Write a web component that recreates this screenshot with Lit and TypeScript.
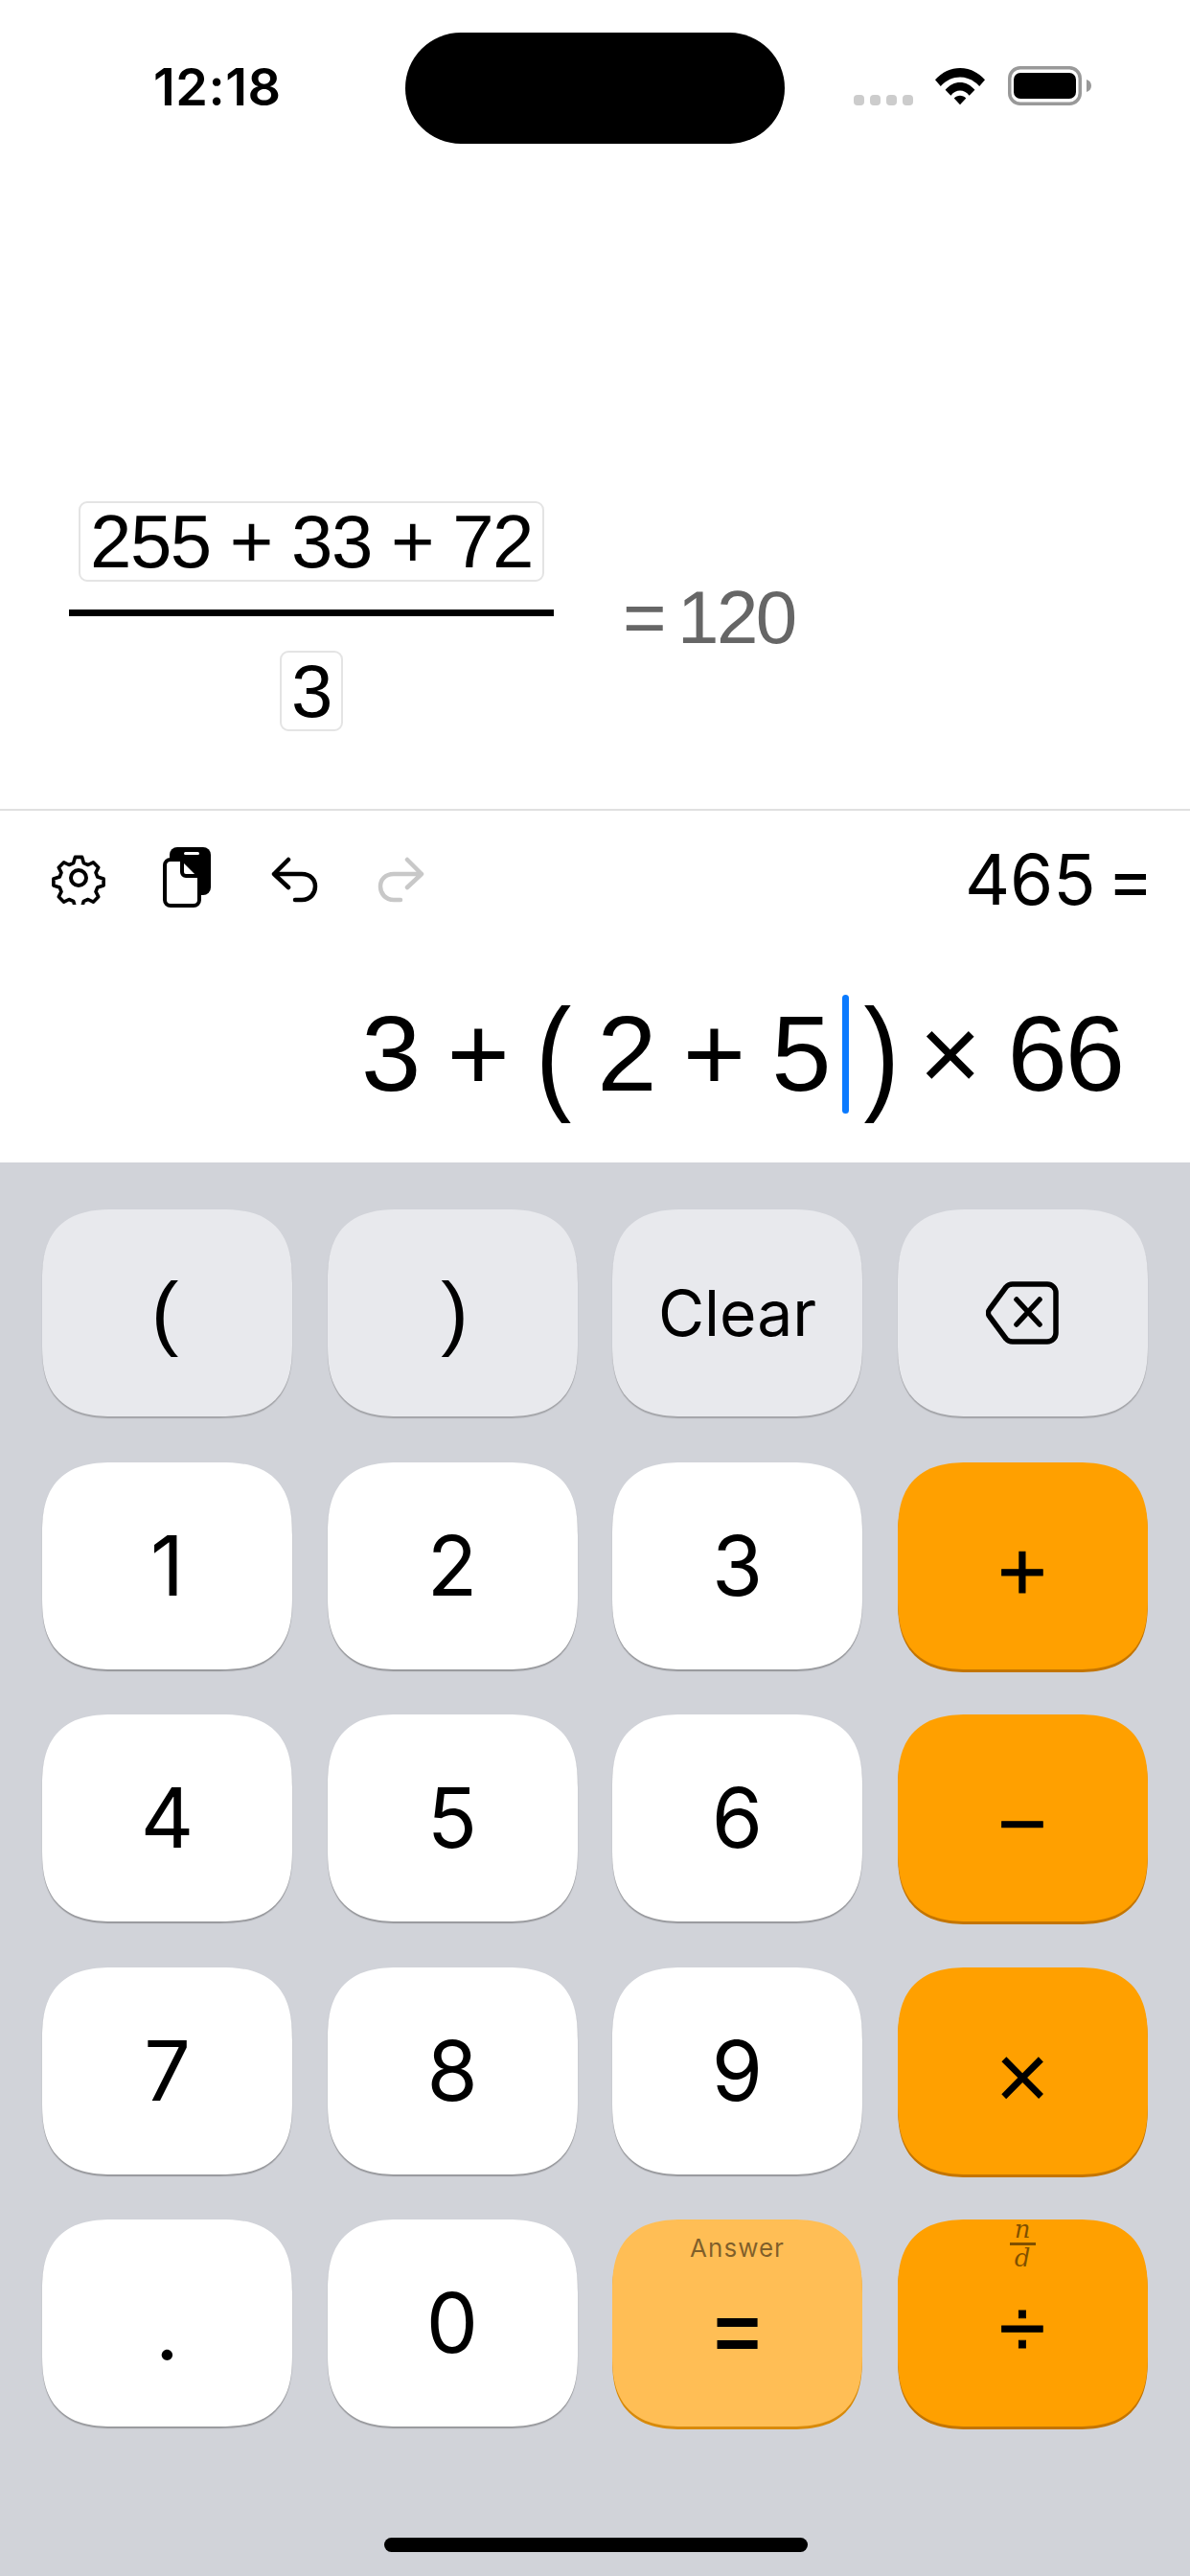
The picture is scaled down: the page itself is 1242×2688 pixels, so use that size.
import { LitElement, html, css, svg } from 'lit';
import { customElement } from 'lit/decorators.js';

type Key = { label: string; kind: 'fn' | 'num' | 'op' | 'ans'; cls?: string; hint?: 'answer' | 'frac' };

const KEYS: Key[] = [
  { label: '(', kind: 'fn', cls: 'open' },
  { label: ')', kind: 'fn', cls: 'close' },
  { label: 'Clear', kind: 'fn', cls: 'word' },
  { label: 'back', kind: 'fn', cls: 'back' },
  { label: '1', kind: 'num' },
  { label: '2', kind: 'num' },
  { label: '3', kind: 'num' },
  { label: '+', kind: 'op' },
  { label: '4', kind: 'num' },
  { label: '5', kind: 'num' },
  { label: '6', kind: 'num' },
  { label: '−', kind: 'op' },
  { label: '7', kind: 'num' },
  { label: '8', kind: 'num' },
  { label: '9', kind: 'num' },
  { label: '×', kind: 'op', cls: 'times' },
  { label: '.', kind: 'num', cls: 'dot' },
  { label: '0', kind: 'num' },
  { label: '=', kind: 'ans', hint: 'answer' },
  { label: '÷', kind: 'op', hint: 'frac' },
];

const backspaceIcon = svg`<svg width="76" height="66" viewBox="0 0 76 66" fill="none" stroke="#000" stroke-width="5.5" stroke-linecap="round" stroke-linejoin="round">
  <path d="M28 3H64a9 9 0 0 1 9 9V54a9 9 0 0 1-9 9H28a9 9 0 0 1-7-3L4 37a6 6 0 0 1 0-8L21 6a9 9 0 0 1 7-3Z"/>
  <path d="M32 19L56 45M56 19L32 45" />
</svg>`;

@customElement('app-root')
export class AppRoot extends LitElement {
  static styles = css`
    :host {
      display: block;
      width: 1242px;
      height: 2688px;
      background: #fff;
      font-family: Inter, 'Liberation Sans', sans-serif;
      color: #000;
      overflow: hidden;
      position: relative;
    }

    .status {
      height: 184px;
      position: relative;
    }
    .time {
      position: absolute;
      left: 160px;
      top: 63px;
      font-size: 54px;
      line-height: 56px;
      font-weight: 600;
      letter-spacing: 0.5px;
    }
    .island {
      position: absolute;
      left: 423px;
      top: 34px;
      width: 396px;
      height: 116px;
      border-radius: 58px;
      background: #000;
    }
    .indicators {
      position: absolute;
      left: 891px;
      top: 68px;
      display: flex;
      align-items: flex-start;
    }
    .dots {
      display: flex;
      gap: 6px;
      margin-top: 31px;
      margin-right: 23px;
    }
    .dots i {
      width: 11px;
      height: 11px;
      border-radius: 4px;
      background: #ccc;
    }
    .wifi {
      margin: 2px 24px 0 0;
    }
    .battery {
      margin-top: 1px;
    }

    .result {
      height: 660px;
      position: relative;
    }
    .fraction {
      position: absolute;
      left: 72px;
      top: 339px;
      width: 506px;
      display: flex;
      flex-direction: column;
      align-items: center;
    }
    .cell {
      border: 2px solid #e4e4e4;
      border-radius: 9px;
      font-family: 'Liberation Sans', Arial, sans-serif;
      font-size: 78px;
      letter-spacing: -1.5px;
      line-height: 80px;
      padding: 0 10px;
      white-space: nowrap;
    }
    .bar {
      align-self: stretch;
      height: 7px;
      background: #000;
      margin: 29px 0 36px;
    }
    .total {
      position: absolute;
      left: 650px;
      top: 416px;
      display: flex;
      align-items: center;
      gap: 14px;
      color: #666;
      font-family: 'Liberation Sans', Arial, sans-serif;
      font-size: 78px;
      letter-spacing: -2.5px;
      line-height: 88px;
    }

    .toolbar {
      height: 148px;
      border-top: 2px solid #e0e0e0;
      box-sizing: border-box;
      position: relative;
    }
    .toolbar svg {
      position: absolute;
      display: block;
    }
    .partial {
      position: absolute;
      right: 38px;
      top: 32px;
      font-size: 73px;
      line-height: 80px;
      display: flex;
      gap: 12px;
    }

    .expression {
      height: 221px;
      box-sizing: border-box;
      display: flex;
      justify-content: flex-end;
      align-items: center;
      padding: 0 70px 6px 0;
      font-family: 'Liberation Sans', Arial, sans-serif;
      font-size: 112px;
      letter-spacing: -2px;
      line-height: 124px;
      white-space: pre;
    }
    .paren {
      display: inline-block;
      transform: scaleY(1.18);
    }
    .tail {
      margin-left: 22px;
    }
    .caret {
      display: inline-block;
      width: 7px;
      height: 124px;
      border-radius: 4px;
      background: #0a7aff;
      margin: 0 16px 0 13px;
    }

    .keyboard {
      height: 1475px;
      box-sizing: border-box;
      background: #d1d3d9;
      padding: 49px 44px 0;
      display: grid;
      grid-template-columns: repeat(4, 261px);
      grid-auto-rows: 216px;
      column-gap: 36.5px;
      row-gap: 47.5px;
    }
    .key {
      position: relative;
      display: flex;
      align-items: center;
      justify-content: center;
      box-sizing: border-box;
      border-radius: 66px;
      font-size: 86px;
      line-height: 1;
    }
    @supports (corner-shape: superellipse(1.4)) {
      .key {
        border-radius: 76px;
        corner-shape: superellipse(1.4);
      }
    }
    .key.fn { background: #e8e9ed; box-shadow: 0 2px 1px #a3a4a8; }
    .key.num { background: #fff; box-shadow: 0 2px 1px #97989c; }
    .key.op {
      background: #ffa000;
      box-shadow: 0 3px 0 #c47500;
      font-family: 'Liberation Sans', Arial, sans-serif;
      font-size: 88px;
      padding-top: 12px;
      -webkit-text-stroke: 0.8px #000;
    }
    .key.ans {
      background: #ffbe55;
      box-shadow: 0 3px 0 #d88a0a;
      font-family: 'Liberation Sans', Arial, sans-serif;
      font-size: 84px;
      font-weight: 700;
      padding-top: 20px;
    }
    .key.word { font-size: 66px; }
    .key.dot { padding-top: 14px; }
    .key.times { font-size: 98px; -webkit-text-stroke: 0; }
    .key.open, .key.close {
      font-family: 'Liberation Sans', Arial, sans-serif;
      padding-bottom: 4px;
    }
    .key.open { padding-right: 5px; }
    .key.close { padding-left: 5px; }
    .hint {
      position: absolute;
      left: 0;
      right: 0;
      text-align: center;
      color: rgba(0, 0, 0, 0.5);
      -webkit-text-stroke: 0;
    }
    .hint.word-hint {
      top: 15px;
      font-size: 26px;
      line-height: 30px;
      letter-spacing: 1px;
      font-family: Inter, sans-serif;
      font-weight: 400;
    }
    .hint.frac {
      top: -3px;
      display: flex;
      flex-direction: column;
      align-items: center;
      font-family: 'DejaVu Serif', 'Liberation Serif', serif;
      font-style: italic;
      font-size: 26px;
      line-height: 27px;
    }
    .hint.frac i {
      width: 27px;
      height: 3px;
      background: rgba(0, 0, 0, 0.5);
    }

    .home {
      position: absolute;
      left: 401px;
      top: 2648px;
      width: 442px;
      height: 15px;
      border-radius: 8px;
      background: #000;
    }
  `;

  private renderKey(k: Key) {
    const cls = `key ${k.kind} ${k.cls ?? ''}`;
    return html`<div class=${cls}>
      ${k.hint === 'answer' ? html`<span class="hint word-hint">Answer</span>` : ''}
      ${k.hint === 'frac' ? html`<span class="hint frac"><span>n</span><i></i><span>d</span></span>` : ''}
      ${k.label === 'back' ? backspaceIcon : k.label}
    </div>`;
  }

  render() {
    return html`
      <div class="status">
        <span class="time">12:18</span>
        <div class="island"></div>
        <div class="indicators">
          <div class="dots"><i></i><i></i><i></i><i></i></div>
          <svg class="wifi" width="52" height="40" viewBox="0 0 54 40">
            <path d="M0 13C15-4 39-4 54 13L48 20C36 7 18 7 6 20Z" />
            <path d="M11 24C20 13 34 13 43 24L37 30C31 23 23 23 17 30Z" />
            <path d="M20.5 33C24 29 30 29 33.5 33L27 40Z" />
          </svg>
          <svg class="battery" width="90" height="42" viewBox="0 0 90 42">
            <rect x="1.75" y="1.75" width="73.5" height="37.5" rx="11" fill="none" stroke="#999" stroke-width="3.5" />
            <rect x="6" y="7" width="65" height="27" rx="7" fill="#000" />
            <path d="M82 14C85 15 87 17 87 20.5C87 24 85 26 82 27Z" fill="#999" />
          </svg>
        </div>
      </div>

      <div class="result">
        <div class="fraction">
          <div class="cell">255 + 33 + 72</div>
          <div class="bar"></div>
          <div class="cell">3</div>
        </div>
        <div class="total"><span>=</span><span>120</span></div>
      </div>

      <div class="toolbar">
        <svg style="left:54px;top:42px" width="56" height="56" viewBox="0 0 56 56" fill="none" stroke="#000" stroke-width="4" stroke-linejoin="round">
          <path d="M24 4h8l2 7 5 2 6-3 6 6-3 6 2 5 7 2v8l-7 2-2 5 3 6-6 6-6-3-5 2-2 7h-8l-2-7-5-2-6 3-6-6 3-6-2-5-7-2v-8l7-2 2-5-3-6 6-6 6 3 5-2Z" transform="translate(2.8 2.8) scale(.9)" />
          <circle cx="28" cy="28" r="8" />
        </svg>
        <svg style="left:168px;top:38px" width="54" height="64" viewBox="0 0 54 64">
          <path d="M17 0H44a8 8 0 0 1 8 8V42a8 8 0 0 1-8 8H17a8 8 0 0 1-8-8V8a8 8 0 0 1 8-8Z" />
          <rect x="24" y="5" width="16" height="3" rx="1.5" fill="#fff" />
          <path d="M10 13H23L40 30V55a6 6 0 0 1-6 6H10a6 6 0 0 1-6-6V19a6 6 0 0 1 6-6Z" fill="#fff" stroke="#000" stroke-width="4" stroke-linejoin="round" />
          <path d="M22 13V26a4 4 0 0 0 4 4H40" fill="none" stroke="#000" stroke-width="4" />
        </svg>
        <svg style="left:283px;top:48px" width="50" height="48" viewBox="0 0 50 48" fill="none" stroke="#000" stroke-width="4.5" stroke-linecap="round" stroke-linejoin="round">
          <path d="M18 3L3 18L18 32M3 18H32C41 18 46 24 46 31S41 45 32 45H25" />
        </svg>
        <svg style="left:393px;top:48px" width="50" height="48" viewBox="0 0 50 48" fill="none" stroke="#c8c8c8" stroke-width="4.5" stroke-linecap="round" stroke-linejoin="round">
          <path d="M32 3L47 18L32 32M47 18H18C9 18 4 24 4 31S9 45 18 45H25" />
        </svg>
        <div class="partial"><span>465</span><span>=</span></div>
      </div>

      <div class="expression">3 + <span class="paren">(</span> 2 + 5<span class="caret"></span><span class="paren">)</span><span class="tail">× 66</span></div>

      <div class="keyboard">${KEYS.map((k) => this.renderKey(k))}</div>
      <div class="home"></div>
    `;
  }
}
